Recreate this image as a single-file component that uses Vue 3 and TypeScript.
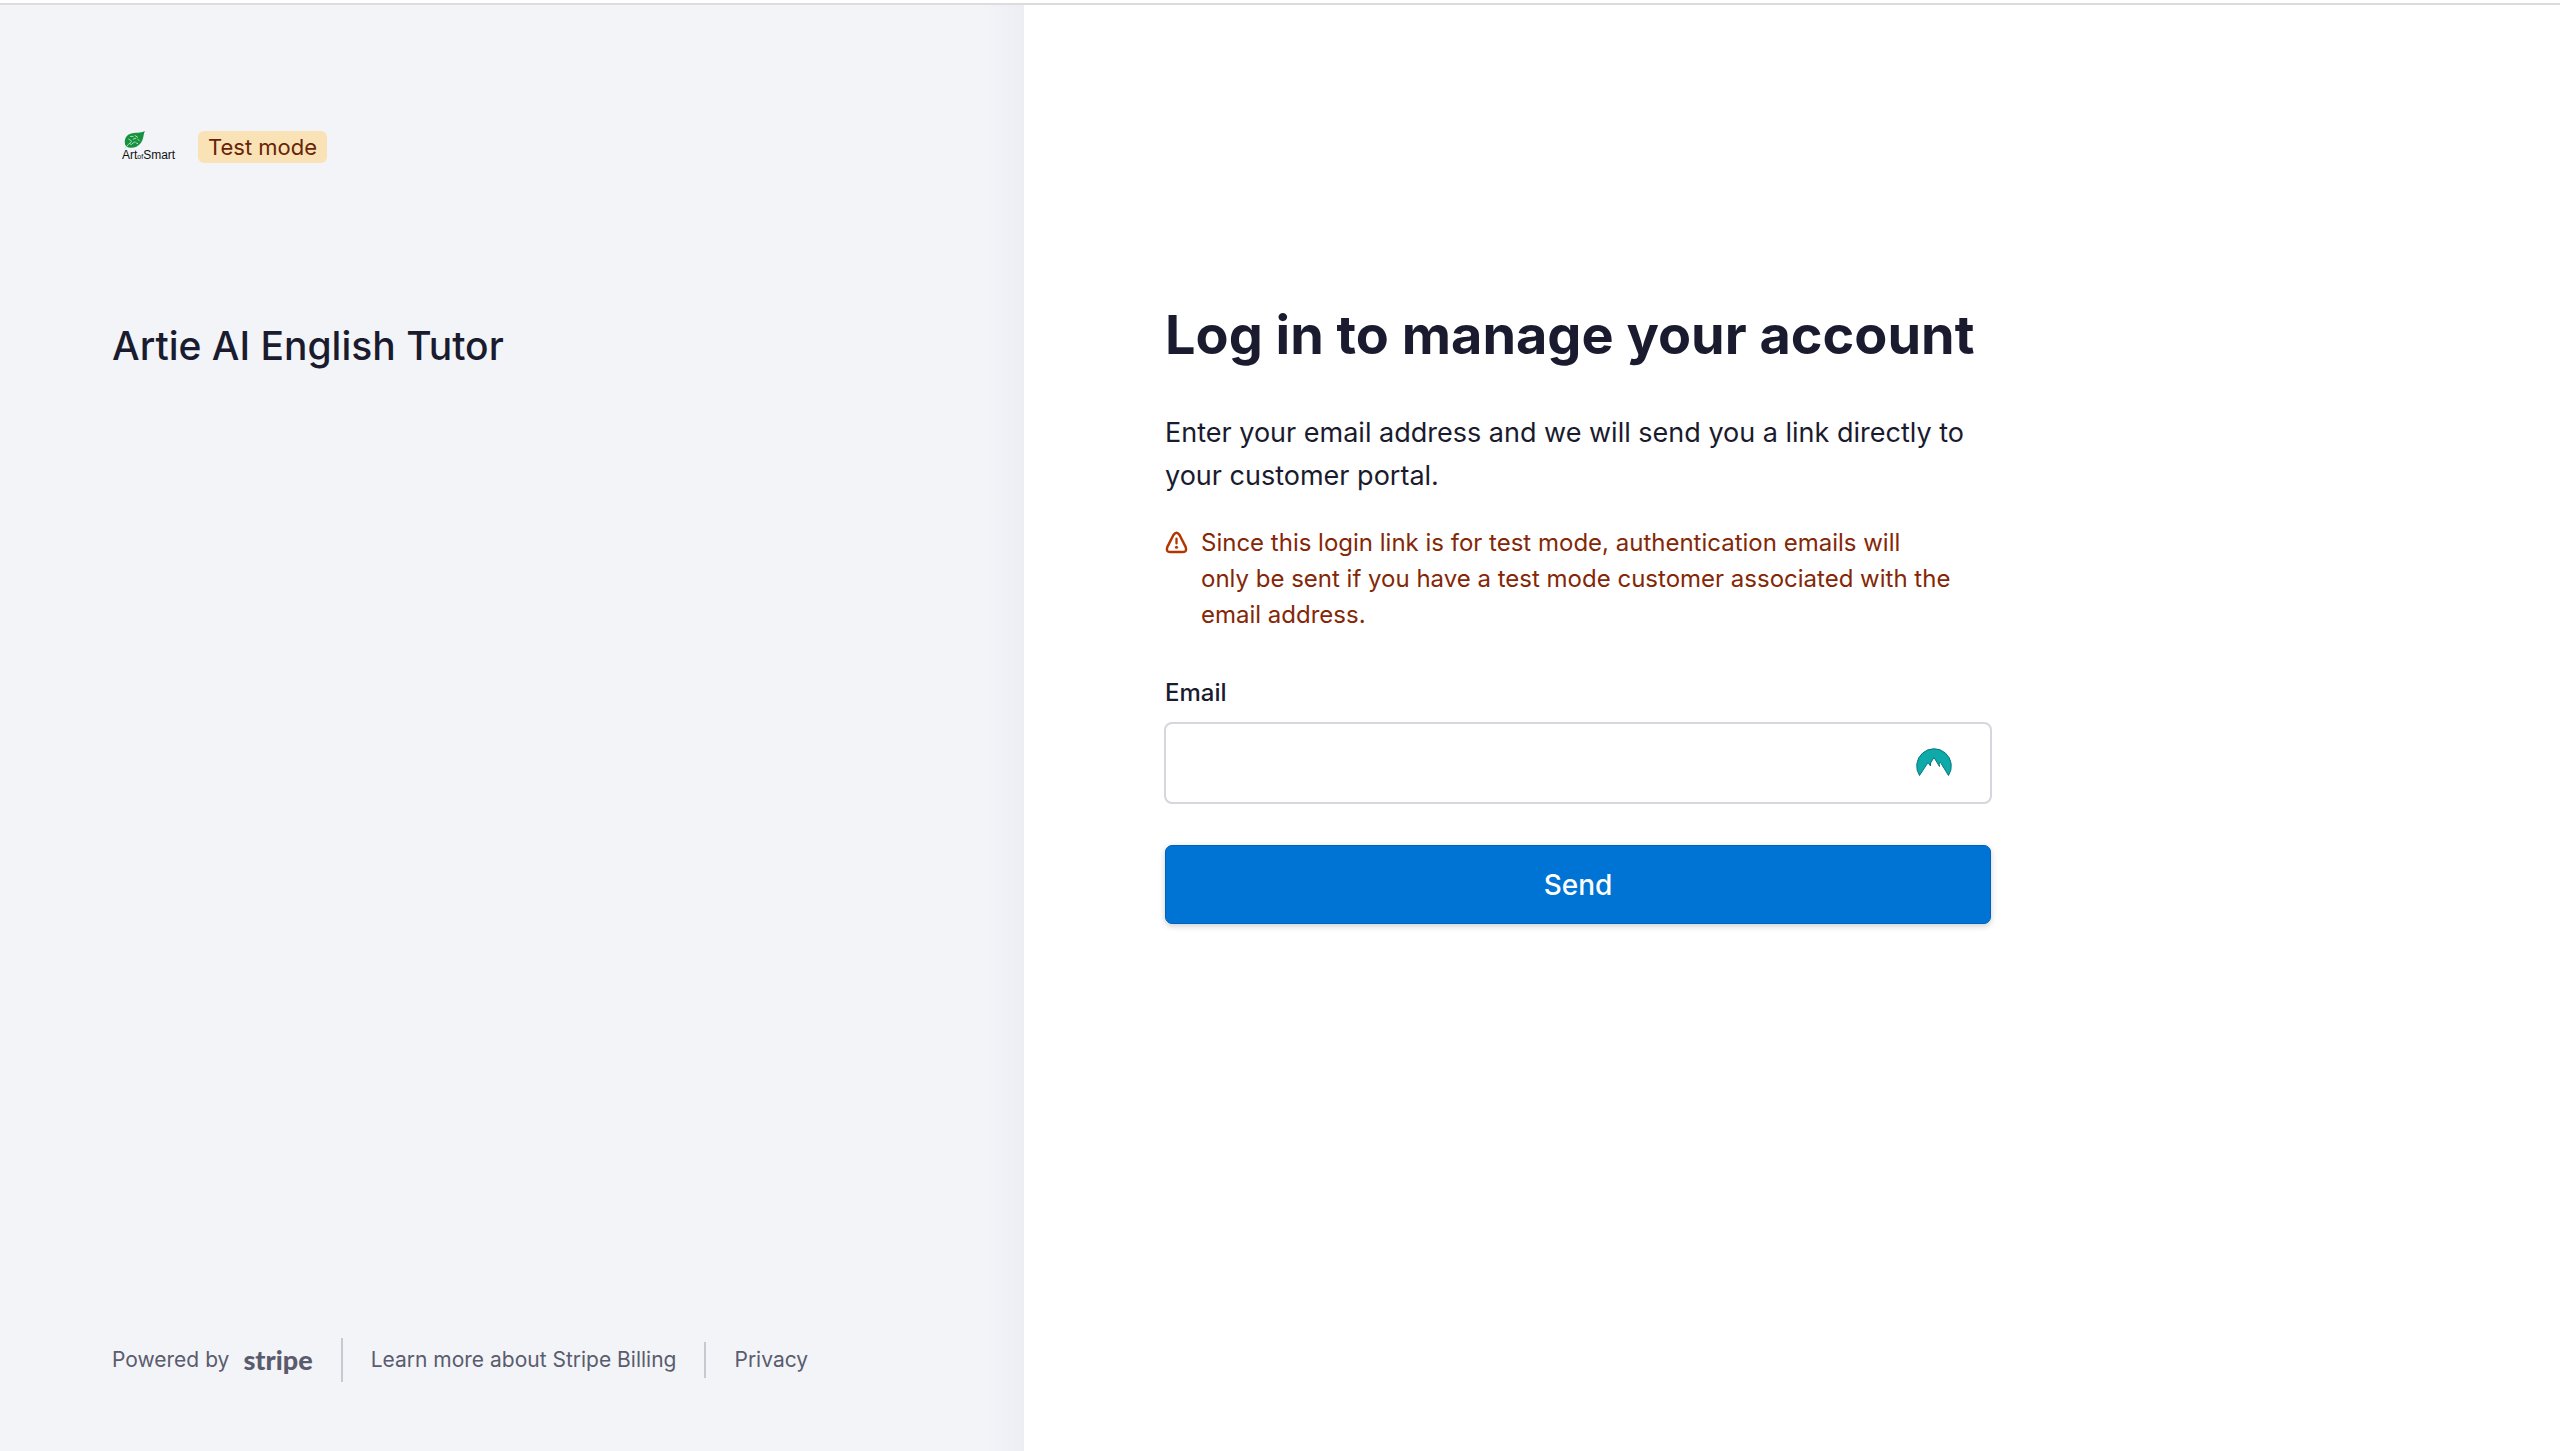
<script setup lang="ts">
import { ref } from 'vue'

const email = ref('')
</script>

<template>
  <div class="page">
    <aside class="side">
      <header class="brand">
        <span class="logo">
          <svg class="leaf" viewBox="0 0 24 20" aria-hidden="true">
            <path d="M23 0C21 4 22 9 18 14C14 19 7 20 2 17C-1 12 1 5 7 3C12 1 18 3 23 0Z" fill="#16913f" />
            <path d="M1 19C4 16 6 13 8 12M7 6h3M12 5l3 2M5 9l3 2M10 9l3-1M15 9l2 2M9 14l3-2M13 13l2 1M6 14l2 1" fill="none" stroke="#b9e5c0" stroke-width="1" stroke-linecap="round" />
          </svg>
          <span class="logo-name">Art<small>of</small>Smart</span>
        </span>
        <span class="badge">Test mode</span>
      </header>
      <p class="product">Artie AI English Tutor</p>
      <footer class="foot">
        <a href="#" class="powered">Powered by <strong>stripe</strong></a>
        <a href="#" class="learn">Learn more about Stripe Billing</a>
        <a href="#" class="privacy">Privacy</a>
      </footer>
    </aside>

    <main class="main">
      <form class="login" @submit.prevent>
        <h1>Log in to manage your account</h1>
        <p class="intro">Enter your email address and we will send you a link directly to your customer portal.</p>
        <div class="notice">
          <svg class="warn" viewBox="0 0 24 24" aria-hidden="true">
            <path d="M8.800 4.200Q12 -0.500 15.200 4.200L21.500 16.500Q23.500 22 18.500 22H5.500Q0.500 22 2.500 16.500Z" fill="none" stroke="#b13600" stroke-width="2.600" stroke-linejoin="round" />
            <path d="M12 8v5" stroke="#b13600" stroke-width="2.400" stroke-linecap="round" />
            <circle cx="12" cy="17" r="1.600" fill="#b13600" />
          </svg>
          <p>Since this login link is for test mode, authentication emails will<br />only be sent if you have a test mode customer associated with the email address.</p>
        </div>
        <label for="email">Email</label>
        <div class="field">
          <input id="email" v-model="email" type="email" />
          <svg class="vault" viewBox="0 0 36 28" aria-hidden="true">
            <path d="M3.500 27.500A17.300 17.300 0 1 1 32.500 27.500L24.500 14.500L23 15.500L23.500 18.500L18 9.500L14.500 15L14.500 18L12 14.500Z" fill="#0daaa9" stroke="#07777c" stroke-width="1" />
          </svg>
        </div>
        <button type="submit">Send</button>
      </form>
    </main>
  </div>
</template>

<style>
body {
  margin: 0;
  background: #fff;
}
</style>

<style scoped>
.page {
  display: flex;
  box-sizing: border-box;
  min-height: 100vh;
  padding-top: 3px;
  font-family: Inter, "Liberation Sans", sans-serif;
  color: #1a1b2e;
}

.side {
  box-sizing: border-box;
  width: 40%;
  display: flex;
  flex-direction: column;
  padding: 126px 112px 69px;
  border-top: 2px solid #dcdcde;
  background: linear-gradient(to left, #eceef3, #f3f4f8 40px);
}

.brand {
  display: flex;
  align-items: center;
}

.logo {
  width: 86px;
  height: 32px;
  display: flex;
  flex-direction: column;
  box-sizing: border-box;
  padding-left: 10px;
}

.leaf {
  width: 24px;
  height: 18px;
  margin-left: 1px;
  flex: none;
}

.logo-name {
  font: 12px/12px "Liberation Sans", sans-serif;
  color: #111;
}

.logo-name small {
  font-size: 7px;
}

.badge {
  padding: 0 10px;
  border-radius: 6px;
  background: #f9e3b6;
  color: #682407;
  font-size: 22px;
  line-height: 32px;
}

.product {
  margin: 158px 0 0;
  font-size: 39px;
  font-weight: 500;
  line-height: 50px;
}

.foot {
  display: flex;
  align-items: center;
  margin-top: auto;
  font-size: 21px;
  line-height: 36px;
}

.foot a {
  color: #5a5c6e;
  text-decoration: none;
}

.foot .powered {
  display: flex;
  gap: 14px;
  padding-right: 28px;
  border-right: 2px solid #c8c9d0;
  line-height: 44px;
}

.powered strong {
  font-family: Lato, "Liberation Sans", sans-serif;
  font-size: 27px;
  font-weight: 900;
}

.learn,
.privacy {
  padding: 0 28px;
}

.privacy {
  border-left: 2px solid #c8c9d0;
}

.main {
  flex: 1;
  padding: 294px 140px 80px;
  border-top: 2px solid #dcdcde;
}

.login {
  max-width: 828px;
}

h1 {
  margin: 0;
  padding-left: 1px;
  font-size: 54px;
  font-weight: 700;
  line-height: 72px;
}

.intro {
  margin: 40px 0 0;
  padding-left: 1px;
  font-size: 27px;
  line-height: 43px;
}

.notice {
  display: flex;
  gap: 13px;
  margin-top: 28px;
  padding: 0 20px 0 1px;
  color: #842706;
  font-size: 24px;
  line-height: 36px;
}

.notice p {
  margin: 0;
}

.warn {
  flex: none;
  width: 23px;
  height: 23px;
  margin-top: 6px;
}

label {
  display: block;
  margin-top: 42px;
  padding-left: 1px;
  font-size: 24px;
  font-weight: 500;
  line-height: 36px;
}

.field {
  position: relative;
  margin-top: 11px;
}

input {
  display: block;
  box-sizing: border-box;
  width: 100%;
  height: 82px;
  padding: 0 88px 0 20px;
  border: 2px solid #d5d6de;
  border-radius: 8px;
  background: #fff;
  font: inherit;
  font-size: 27px;
}

.vault {
  position: absolute;
  right: 40px;
  top: 26px;
  width: 36px;
  height: 28px;
}

button {
  display: block;
  width: calc(100% - 2px);
  height: 79px;
  margin: 41px 1px 0;
  border: 1px solid #0062b8;
  border-radius: 7px;
  background: #0074d4;
  box-shadow: 0 2px 6px rgba(0, 0, 0, 0.2);
  color: #fff;
  font: inherit;
  font-size: 28px;
  font-weight: 500;
}
</style>
